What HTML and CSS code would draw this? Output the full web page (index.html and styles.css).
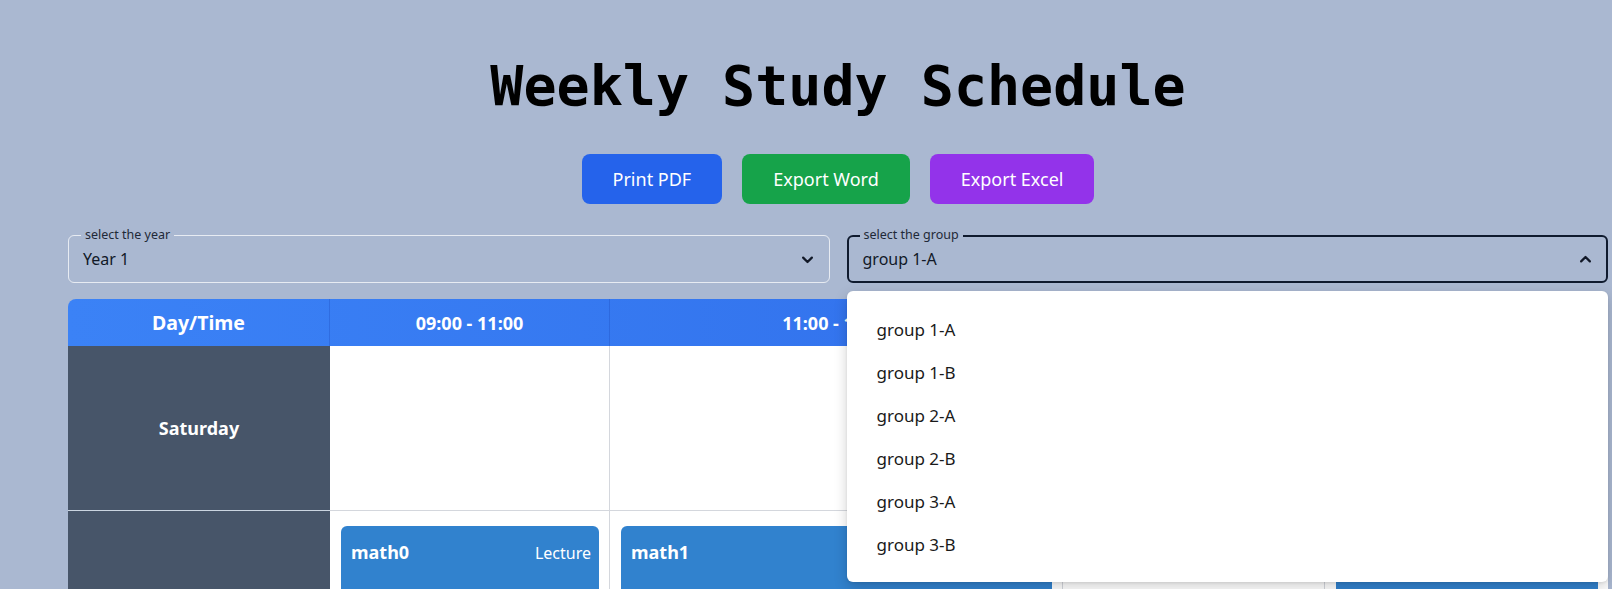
FILE: index.html
```html
<!DOCTYPE html>
<html lang="en">
<head>
<meta charset="utf-8">
<title>Weekly Study Schedule</title>
<link rel="stylesheet" href="styles.css">
</head>
<body>
<div class="page">
  <h1 class="title">Weekly Study Schedule</h1>

  <div class="actions">
    <button class="btn btn-blue">Print PDF</button>
    <button class="btn btn-green">Export Word</button>
    <button class="btn btn-purple">Export Excel</button>
  </div>

  <div class="filters">
    <div class="select">
      <span class="select-label">select the year</span>
      <span class="select-value">Year 1</span>
      <svg class="chevron" viewBox="0 0 24 24" width="15" height="15"><path d="M5 9l7 7 7-7" fill="none" stroke="currentColor" stroke-width="3.6" stroke-linecap="round" stroke-linejoin="round"/></svg>
    </div>
    <div class="select select-open">
      <span class="select-label">select the group</span>
      <span class="select-value">group 1-A</span>
      <svg class="chevron" viewBox="0 0 24 24" width="15" height="15"><path d="M5 15l7-7 7 7" fill="none" stroke="currentColor" stroke-width="3.6" stroke-linecap="round" stroke-linejoin="round"/></svg>
      <ul class="menu">
        <li class="menu-item">group 1-A</li>
        <li class="menu-item">group 1-B</li>
        <li class="menu-item">group 2-A</li>
        <li class="menu-item">group 2-B</li>
        <li class="menu-item">group 3-A</li>
        <li class="menu-item">group 3-B</li>
      </ul>
    </div>
  </div>

  <div class="schedule-wrap">
    <table class="schedule">
      <colgroup>
        <col class="col-day">
        <col class="col-a">
        <col class="col-b">
        <col class="col-c">
        <col class="col-d">
      </colgroup>
      <thead>
        <tr>
          <th class="th-day">Day/Time</th>
          <th>09:00 - 11:00</th>
          <th>11:00 - 13:00</th>
          <th>13:00 - 15:00</th>
          <th>15:00 - 17:00</th>
        </tr>
      </thead>
      <tbody>
        <tr class="row-empty">
          <td class="day">Saturday</td>
          <td class="slot"></td>
          <td class="slot"></td>
          <td class="slot"></td>
          <td class="slot"></td>
        </tr>
        <tr>
          <td class="day">Sunday</td>
          <td class="slot">
            <div class="card">
              <div class="card-head"><span class="card-title">math0</span><span class="card-type">Lecture</span></div>
            </div>
          </td>
          <td class="slot">
            <div class="card">
              <div class="card-head"><span class="card-title">math1</span><span class="card-type">Lecture</span></div>
            </div>
          </td>
          <td class="slot"></td>
          <td class="slot">
            <div class="card">
              <div class="card-head"><span class="card-title">math3</span><span class="card-type">Section</span></div>
            </div>
          </td>
        </tr>
      </tbody>
    </table>
  </div>
</div>
</body>
</html>
```

FILE: styles.css
```css
html {
  scrollbar-width: none;
}
html::-webkit-scrollbar {
  display: none;
}
body {
  margin: 0;
  background: #aab8d1;
  font-family: "Noto Sans", "Open Sans", sans-serif;
  color: #111827;
}
.page {
  width: 1540px;
  margin-left: 68px;
}
.title {
  margin: 54px 0 0;
  font-family: "DejaVu Sans Mono", "Liberation Mono", monospace;
  font-weight: bold;
  font-size: 55px;
  line-height: 64px;
  text-align: center;
  color: #000;
}
.actions {
  display: flex;
  justify-content: center;
  gap: 20px;
  margin-top: 36px;
}
.btn {
  height: 50px;
  padding: 0 31px;
  border: none;
  border-radius: 8px;
  font-family: inherit;
  font-size: 18px;
  color: #fff;
  cursor: pointer;
}
.btn-blue { background: #2563eb; }
.btn-green { background: #16a34a; }
.btn-purple { background: #9333ea; }

.filters {
  display: grid;
  grid-template-columns: 1fr 1fr;
  gap: 17px;
  margin-top: 31px;
}
.select {
  position: relative;
  display: flex;
  align-items: center;
  justify-content: space-between;
  height: 48px;
  box-sizing: border-box;
  padding: 0 14px;
  border: 1px solid rgba(255, 255, 255, 0.72);
  border-radius: 6px;
  font-size: 16px;
}
.select-open {
  border: 2px solid #0f1a2e;
  padding: 0 13px 0 14px;
}
.select-label {
  position: absolute;
  top: -9px;
  left: 12px;
  padding: 0 4px;
  background: #aab8d1;
  font-size: 12.5px;
  line-height: 16px;
  color: #1f2937;
}
.select-open .select-label {
  top: -10px;
  left: 11px;
}
.select-value {
  line-height: 24px;
}
.chevron {
  color: #111827;
}
.menu {
  position: absolute;
  top: calc(100% + 10px);
  left: -2px;
  right: -2px;
  z-index: 10;
  margin: 0;
  padding: 17px 0 16px;
  list-style: none;
  background: #fff;
  border-radius: 6px;
  box-shadow: 0 5px 14px rgba(0, 0, 0, 0.18), 0 1px 3px rgba(0, 0, 0, 0.08);
}
.menu-item {
  height: 43px;
  line-height: 43px;
  padding: 0 30px;
  font-size: 17px;
  color: #1a1a1a;
}

.schedule-wrap {
  margin-top: 16px;
  border-radius: 8px 8px 0 0;
  overflow: hidden;
  background: linear-gradient(90deg, #3b82f6, #2c67e6);
}
.schedule {
  width: 100%;
  table-layout: fixed;
  border-collapse: separate;
  border-spacing: 0;
}
.col-day { width: 262px; }
.col-a { width: 280px; }
.col-b { width: 453px; }
.col-c { width: 262px; }
.col-d { width: 283px; }

.schedule th {
  height: 47px;
  padding: 0;
  font-size: 18px;
  font-weight: bold;
  color: #fff;
  text-align: center;
  border-right: 1px solid rgba(20, 60, 170, 0.25);
}
.schedule th:last-child { border-right: none; }
.schedule .th-day { font-size: 19.5px; }

.row-empty { height: 165px; }
.day {
  background: #475569;
  color: #fff;
  font-size: 18px;
  font-weight: bold;
  text-align: center;
  border-bottom: 1px solid #cbd5e1;
}
.slot {
  background: #fff;
  vertical-align: top;
  padding: 15px 10px 15px 11px;
  border-right: 1px solid #d4d7dd;
  border-bottom: 1px solid #d4d7dd;
}
.slot:last-child { border-right: none; }

.card {
  background: #3182ce;
  color: #fff;
  border-radius: 6px;
  padding: 12px 8px 12px 10px;
  min-height: 150px;
  box-sizing: border-box;
}
.card-head {
  display: flex;
  justify-content: space-between;
  align-items: baseline;
  line-height: 28px;
}
.card-title {
  font-size: 18px;
  font-weight: bold;
}
.card-type {
  font-size: 16px;
}
```
